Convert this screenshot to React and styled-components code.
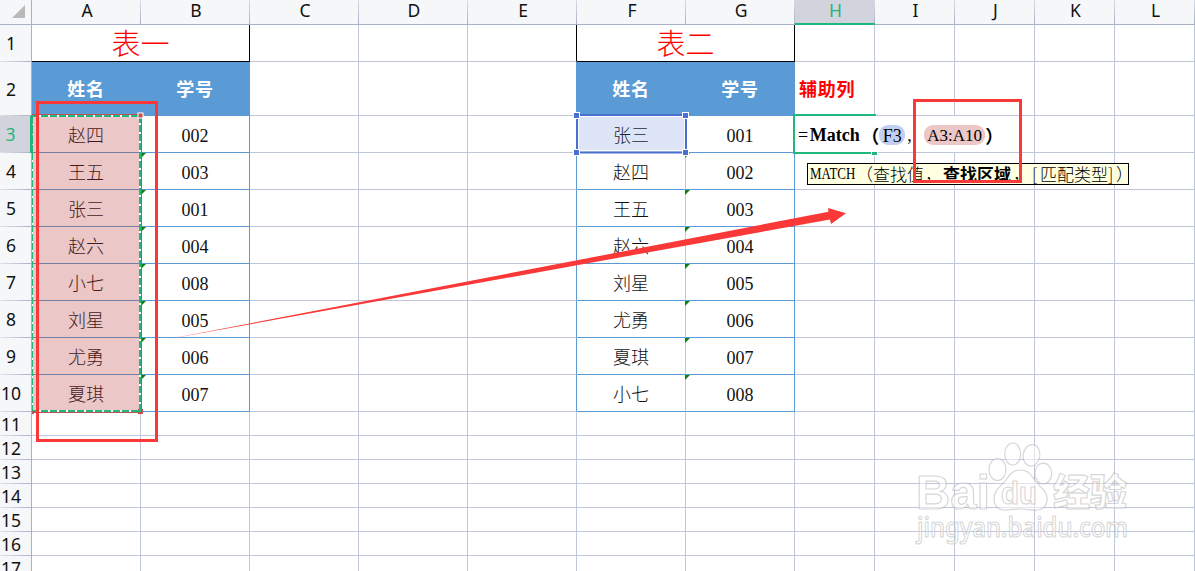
import React from 'react';
import styled, { createGlobalStyle } from 'styled-components';

const GRID = '#c0c7da';
const HEAD_LINE = '#a9b1c9';
const BLUE = '#5b9bd5';
const GREEN = '#21b67c';
const RED = '#fb3838';
const SERIF = '"Liberation Serif", "Noto Sans CJK SC", serif';

const GlobalStyle = createGlobalStyle`
  * { box-sizing: border-box; }
  body { margin: 0; background: #fff; overflow: hidden; }
`;

const Sheet = styled.main`
  position: relative;
  width: 1195px;
  height: 571px;
  overflow: hidden;
  background: #fff;
`;

const Row = styled.div`
  display: grid;
  grid-template-columns: 32px repeat(7, 109px) repeat(5, 80px);
  height: ${(p) => p.$height}px;
`;

const Corner = styled.div`
  display: flex;
  justify-content: flex-end;
  align-items: flex-end;
  padding: 0 6px 6px 0;
  background: #f5f7f9;
  border-right: 1px solid ${HEAD_LINE};
  border-bottom: 1px solid ${HEAD_LINE};
`;

const CornerMark = styled.div`
  width: 13px;
  height: 13px;
  background: #b9b9b9;
  clip-path: polygon(100% 0, 100% 100%, 0 100%);
`;

const HeaderCell = styled.div`
  display: flex;
  align-items: center;
  justify-content: center;
  font: 17.5px/1 'Noto Sans', sans-serif;
  color: ${(p) => (p.$active ? GREEN : '#111')};
`;

const ColumnHead = styled(HeaderCell)`
  padding: 0 0 2px 1px;
  background: linear-gradient(#d9dde7, ${HEAD_LINE}) right / 1px 100% no-repeat,
    ${(p) => (p.$active ? '#d1d4dc' : '#f5f7f9')};
  border-bottom: ${(p) => (p.$active ? `2px solid ${GREEN}` : `1px solid ${HEAD_LINE}`)};
`;

const RowHead = styled(HeaderCell)`
  padding: 1px 9px 0 0;
  background: linear-gradient(90deg, #dfe2ea, ${HEAD_LINE}) bottom / 100% 1px no-repeat,
    ${(p) => (p.$active ? '#d1d4dc' : '#f5f7f9')};
  border-right: ${(p) => (p.$active ? `2px solid ${GREEN}` : `1px solid ${HEAD_LINE}`)};
`;

const Cell = styled.div`
  position: relative;
  display: flex;
  align-items: center;
  justify-content: center;
  min-width: 0;
  padding-top: 3px;
  white-space: nowrap;
  font: 300 18px/1 ${SERIF};
  color: #111;
  border-right: 1px solid ${(p) => p.$right || GRID};
  border-bottom: 1px solid ${(p) => p.$bottom || GRID};
`;

const TitleCell = styled(Cell)`
  grid-column: span 2;
  padding-top: 4px;
  font-size: 29px;
  color: #f00;
`;

const TableHead = styled(Cell)`
  padding-top: 2px;
  font-weight: 700;
  letter-spacing: 0.8px;
  color: #fff;
  background: ${BLUE};
  border-color: ${BLUE};
`;

const HelperHead = styled(Cell)`
  justify-content: flex-start;
  padding: 2px 0 0 4px;
  font-weight: 700;
  letter-spacing: 0.7px;
  color: #f00;
`;

const TextFlag = styled.i`
  position: absolute;
  left: ${(p) => p.$x}px;
  top: 0;
  width: 5px;
  height: 5px;
  background: #0a820a;
  clip-path: polygon(0 0, 100% 0, 0 100%);
`;

const Editor = styled.div`
  grid-column: span 3;
  display: flex;
  align-items: center;
  padding: 2px 0 0 3px;
  white-space: pre;
  font: 18px/1 ${SERIF};
  color: #000;
  border-right: 1px solid ${GRID};
  border-bottom: 1px solid ${GRID};
`;

const FunctionName = styled.b`
  width: 53px;
  text-align: center;
`;

const Paren = styled.b`
  width: 18px;
  font-family: 'Noto Sans CJK SC', sans-serif;
`;

const Comma = styled.span`
  width: 19px;
  padding-left: 2px;
`;

const Reference = styled.span`
  display: flex;
  align-items: center;
  justify-content: center;
  width: ${(p) => p.$width}px;
  height: 20px;
  padding-top: 1px;
  border-radius: 9px;
  font-size: ${(p) => p.$size || 18}px;
  background: ${(p) => p.$color};
`;

const Layer = styled.svg`
  position: absolute;
  left: 0;
  top: 0;
  pointer-events: none;
`;

const Hint = styled.div`
  position: absolute;
  left: 807px;
  top: 163px;
  width: 322px;
  height: 22px;
  display: flex;
  align-items: center;
  padding-left: 2px;
  overflow: hidden;
  white-space: nowrap;
  font: 300 17px/20px 'Noto Sans CJK SC', sans-serif;
  color: #000;
  background: #ffffe1;
  border: 1px solid #000;
`;

const HintName = styled.span`
  width: 46px;
  flex: none;
  font: 17px/20px ${SERIF};

  span {
    display: inline-block;
    transform: scaleX(0.76);
    transform-origin: left;
  }
`;

const HintPart = styled.span`
  flex: none;
  width: ${(p) => p.$width}px;
  font-weight: ${(p) => (p.$bold ? 700 : 300)};
`;

const COLUMNS = 'ABCDEFGHIJKL'.split('');

const RECORDS = [
  ['赵四', '002', '张三', '001'],
  ['王五', '003', '赵四', '002'],
  ['张三', '001', '王五', '003'],
  ['赵六', '004', '赵六', '004'],
  ['小七', '008', '刘星', '005'],
  ['刘星', '005', '尤勇', '006'],
  ['尤勇', '006', '夏琪', '007'],
  ['夏琪', '007', '小七', '008'],
];

const Blank = ({ count, last }) =>
  Array.from({ length: count }, (_, i) => (
    <Cell key={i} $right={i === count - 1 ? last : undefined} />
  ));

function RecordRow({ record, index }) {
  const [nameA, idA, nameB, idB] = record;
  return (
    <Row $height={37}>
      <RowHead $active={index === 0}>{index + 3}</RowHead>
      <Cell $bottom={BLUE}>{nameA}</Cell>
      <Cell $right={BLUE} $bottom={BLUE}>
        {idA}
        {index > 0 && <TextFlag $x={0} />}
      </Cell>
      <Blank count={3} last={BLUE} />
      <Cell $bottom={BLUE}>{nameB}</Cell>
      <Cell $right={BLUE} $bottom={BLUE}>
        {idB}
        {index > 0 && <TextFlag $x={-1} />}
      </Cell>
      {index === 0 ? (
        <>
          <Editor>
            <span>=</span>
            <FunctionName>Match</FunctionName>
            <Paren>（</Paren>
            <Reference $width={26} $color="#c3cff0">F3</Reference>
            <Comma>,</Comma>
            <Reference $width={61} $size={17} $color="#ebc7c7">A3:A10</Reference>
            <Paren>）</Paren>
          </Editor>
          <Blank count={2} />
        </>
      ) : (
        <Blank count={5} />
      )}
    </Row>
  );
}

function Selections() {
  return (
    <Layer width="1195" height="571">
      <rect x="32" y="115" width="109" height="297" fill="rgb(184,55,55)" fillOpacity=".28" />
      <path d="M32 114.5H141.5V412.5H32" fill="none" stroke="#c0504d" />
      <path d="M32 116H140V411H32" fill="none" stroke="#fff" strokeWidth="2" />
      <path d="M32 116H140V411H32" fill="none" stroke={GREEN} strokeWidth="2" strokeDasharray="7 2" />
      <path d="M32.5 153V411" stroke="#fff" />
      <path d="M32.5 153V411" stroke={GREEN} strokeDasharray="7 2" />
      <path d="M32 115V153" stroke={GREEN} strokeWidth="2" strokeDasharray="9 1" />
      <rect x="138" y="113" width="5" height="5" fill="#c0504d" stroke="#fff" />
      <rect x="138" y="409" width="5" height="5" fill="#c0504d" />
      <rect x="32" y="411" width="2" height="3" fill="#c0504d" />
      <path d="M138 411H141M140 408V412" stroke={GREEN} strokeWidth="2" />

      <rect x="577" y="115" width="109" height="37" fill="#4a6fd0" fillOpacity=".18" />
      <rect x="578.5" y="116.5" width="106" height="34" fill="none" stroke="#fff" strokeOpacity=".8" />
      <rect x="577" y="115" width="109" height="37.5" fill="none" stroke="#4a6fd0" strokeWidth="2" />
      {[[576.5, 115.5], [685.5, 115.5], [576.5, 152.5], [685.5, 152.5]].map(([x, y]) => (
        <rect key={`${x}-${y}`} x={x - 3} y={y - 3} width="6" height="6" fill="#4a6fd0" stroke="#fff" />
      ))}

      <path d="M876 115H794V153H871" fill="none" stroke={GREEN} strokeWidth="2" />
      <rect x="871" y="151" width="7" height="5" fill="#fff" />
      <rect x="872" y="152" width="5" height="3" fill={GREEN} />
    </Layer>
  );
}

function Annotations() {
  return (
    <Layer width="1195" height="571">
      <g fill="none" stroke={RED} strokeWidth="3">
        <rect x="37.5" y="102.5" width="119" height="338" />
        <rect x="914.5" y="100.5" width="106" height="81" />
      </g>
      <path d="M166 339.5L828.5 211.8L828 208L846 213.2L831 224L830 219.5Z" fill={RED} />
    </Layer>
  );
}

function Watermark() {
  return (
    <Layer width="1195" height="571">
      <g fill="#fff" fillOpacity=".55" stroke="#aaa" strokeOpacity=".48" strokeWidth="1.2" strokeLinejoin="round">
        <ellipse cx="997.5" cy="469.5" rx="8.5" ry="11" />
        <ellipse cx="1012.7" cy="454" rx="8" ry="11" />
        <ellipse cx="1031.5" cy="455.3" rx="8.3" ry="10.8" transform="rotate(10 1031.5 455.3)" />
        <ellipse cx="1043.3" cy="473.5" rx="8.4" ry="10.3" />
        <path d="M1020 470C1013 470 1010 474 1006 480C1002 486 994 489 994 499C994 506 999 511 1006 510C1012 509.5 1016 509 1021 509C1027 509 1032 510.5 1038 510C1045 509 1048 503 1047 497C1046 489 1038 486 1034 479C1030 473 1027 470 1020 470Z" />
        <text x="916" y="509" fontFamily="Liberation Sans, sans-serif" fontWeight="700" fontSize="49" textLength="74" lengthAdjust="spacingAndGlyphs">Bai</text>
        <text x="1001" y="504" fontFamily="Liberation Sans, sans-serif" fontWeight="700" fontSize="31" textLength="36" lengthAdjust="spacingAndGlyphs">du</text>
        <text x="1053" y="506" fontFamily="Noto Sans CJK SC, sans-serif" fontWeight="900" fontSize="37" textLength="74">经验</text>
        <text x="917" y="537" fontFamily="Noto Sans, sans-serif" fontWeight="500" fontSize="27" textLength="211" lengthAdjust="spacingAndGlyphs">jingyan.baidu.com</text>
      </g>
    </Layer>
  );
}

export default function App() {
  return (
    <Sheet>
      <GlobalStyle />
      <Row $height={25}>
        <Corner><CornerMark /></Corner>
        {COLUMNS.map((name) => (
          <ColumnHead key={name} $active={name === 'H'}>{name}</ColumnHead>
        ))}
      </Row>
      <Row $height={37}>
        <RowHead>1</RowHead>
        <TitleCell $right="#000" $bottom="#000">表一</TitleCell>
        <Blank count={3} last="#000" />
        <TitleCell $right="#000" $bottom="#000">表二</TitleCell>
        <Blank count={5} />
      </Row>
      <Row $height={54}>
        <RowHead>2</RowHead>
        <TableHead>姓名</TableHead>
        <TableHead>学号</TableHead>
        <Blank count={3} last={BLUE} />
        <TableHead>姓名</TableHead>
        <TableHead>学号</TableHead>
        <HelperHead>辅助列</HelperHead>
        <Blank count={4} />
      </Row>
      {RECORDS.map((record, index) => (
        <RecordRow key={index} record={record} index={index} />
      ))}
      {[11, 12, 13, 14, 15, 16, 17].map((n) => (
        <Row key={n} $height={24}>
          <RowHead>{n}</RowHead>
          <Blank count={12} />
        </Row>
      ))}
      <Selections />
      <Hint>
        <HintName><span>MATCH</span></HintName>
        <HintPart $width={17}>（</HintPart>
        <HintPart $width={52}>查找值</HintPart>
        <HintPart $width={18}>，</HintPart>
        <HintPart $width={70} $bold>查找区域</HintPart>
        <HintPart $width={19}>，</HintPart>
        <HintPart $width={8}>[</HintPart>
        <HintPart $width={68}>匹配类型</HintPart>
        <HintPart $width={8}>]</HintPart>
        <HintPart $width={14}>）</HintPart>
      </Hint>
      <Watermark />
      <Annotations />
    </Sheet>
  );
}
